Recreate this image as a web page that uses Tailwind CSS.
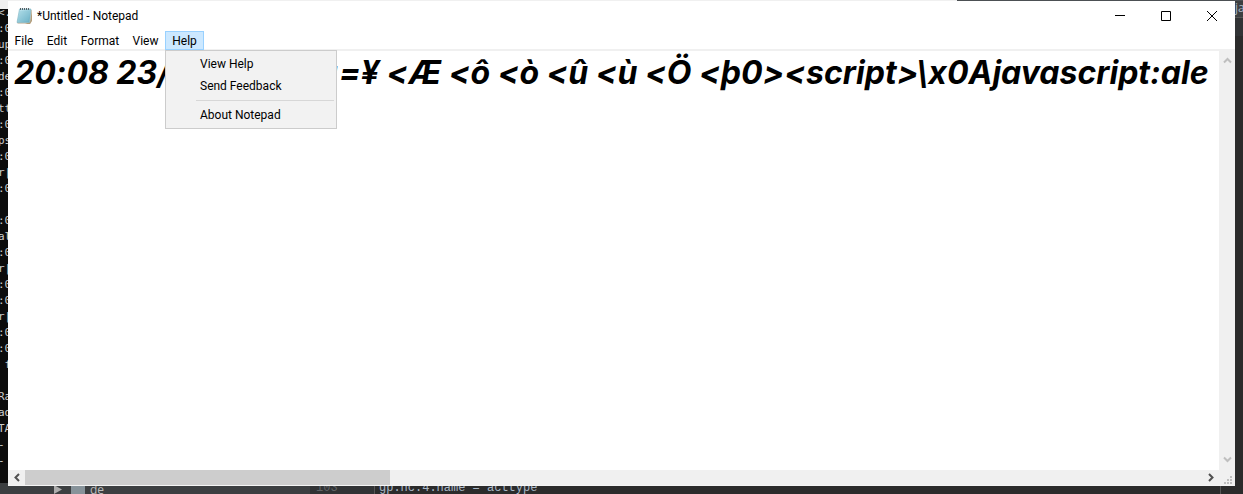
<!DOCTYPE html>
<html lang="en">
<head>
<meta charset="utf-8">
<title>*Untitled - Notepad</title>
<script src="https://cdn.jsdelivr.net/npm/@tailwindcss/browser@4"></script>
</head>
<body class="flex h-screen flex-col overflow-hidden bg-[#2b2b2b] font-['Roboto','Open_Sans',sans-serif] text-xs text-black">
  <!-- tabs of the editor behind the window -->
  <div class="flex h-px shrink-0 bg-[#4c5053]"><div class="w-[77%] bg-[#f0f0f0]"></div></div>

  <div class="flex min-h-0 flex-1">
    <!-- console behind the window -->
    <div class="flex w-2 shrink-0 flex-col overflow-hidden bg-[#0c0c0c]">
      <div class="h-2 shrink-0 bg-[#f0f0f0]"></div>
      <pre class="-mt-1 -ml-0.5 min-h-0 flex-1 overflow-hidden font-['DejaVu_Sans_Mono',monospace] text-[11px] leading-4 text-[#cccccc]">&lt;.
:0
up
:0
de
:0
tt
:0
ps
:0
r|
:0

:0
al
:0
r|
:0
:0
r|
:0
:0
 f

Ra
ad
TA
-
-</pre>
      <div class="h-[3px] shrink-0 bg-[#3c3f41]"></div>
    </div>

    <!-- Notepad window -->
    <main class="flex min-w-0 flex-1 flex-col bg-white">
      <header class="flex h-[30px] shrink-0 items-center pl-2">
        <svg class="mr-1 h-[18px] w-[17px]" viewBox="0 0 17 18" aria-hidden="true">
          <defs><linearGradient id="page" x1="0" y1="0" x2="1" y2="1"><stop offset="0" stop-color="#c9edf5"/><stop offset="1" stop-color="#5fa9c0"/></linearGradient></defs>
          <path d="M4 3h12l-1 13-2 1H2l-1-1z" fill="#d8d1c5"/>
          <path d="M14 15l2-12v11l-2 3H9z" fill="#b39d7b"/>
          <path d="M3.500 2h11.500l-1.500 13.500H1z" fill="url(#page)" stroke="#7fb5c4" stroke-width=".6"/>
          <path d="M3.500 5h10M3.200 7h10M3 9h10M2.700 11h10M2.400 13h10" stroke="#87c5d5" stroke-width=".6"/>
          <path d="M4.500 1v2M6.500 1v2M8.500 1v2M10.500 1v2M12.500 1v2" stroke="#555f64"/>
        </svg>
        <h1 class="flex-1">*Untitled - Notepad</h1>
        <button aria-label="Minimize" class="flex h-full w-[46px] items-center justify-center"><svg class="size-[11px]" viewBox="0 0 11 11"><path d="M0 4.500h10" stroke="#000"/></svg></button>
        <button aria-label="Maximize" class="flex h-full w-[46px] items-center justify-center"><svg class="size-[11px]" viewBox="0 0 11 11"><path d="M.5.5h9v9h-9z" fill="none" stroke="#000"/></svg></button>
        <button aria-label="Close" class="flex h-full w-[46px] items-center justify-center"><svg class="size-[11px]" viewBox="0 0 11 11"><path d="M0 0l10 10M10 0L0 10" stroke="#000"/></svg></button>
      </header>

      <nav class="flex h-[18px] shrink-0 items-stretch" aria-label="Menu bar">
        <button class="w-8 pt-0.5">File</button>
        <button class="w-[34px] pt-0.5">Edit</button>
        <button class="w-[52px] pt-0.5">Format</button>
        <button class="w-[39px] pt-0.5">View</button>
        <div class="relative">
          <button aria-expanded="true" class="h-[19px] w-[39px] border border-[#99d1ff] bg-[#cce8ff]">Help</button>
          <div role="menu" class="absolute top-[19px] left-0 z-10 flex w-[172px] flex-col border border-[#cccccc] bg-[#f2f2f2] p-0.5">
            <button role="menuitem" class="h-[22px] pl-8 text-left">View Help</button>
            <button role="menuitem" class="h-[22px] pl-8 text-left">Send Feedback</button>
            <hr class="my-[3px] ml-7 border-[#d7d7d7]">
            <button role="menuitem" class="h-[22px] pl-8 text-left">About Notepad</button>
          </div>
        </div>
      </nav>

      <div class="flex min-h-0 flex-1 border-t-2 border-[#f0f0f0]">
        <textarea aria-label="Text editor" wrap="off" spellcheck="false" class="mr-2 min-w-0 flex-1 resize-none overflow-hidden whitespace-pre pt-0.5 pl-1.5 font-['Inter',sans-serif] text-[32px] leading-10 font-bold italic outline-none [font-variant-ligatures:no-contextual]">20:08 23/01/2020. &lt;=¥ &lt;Æ &lt;ô &lt;ò &lt;û &lt;ù &lt;Ö &lt;þ0&gt;&lt;script&gt;\x0Ajavascript:ale</textarea>
        <div class="flex w-4 shrink-0 flex-col items-center justify-between bg-[#f0f0f0] py-1.5">
          <button aria-label="Scroll up"><svg class="h-2 w-[9px]" viewBox="0 0 9 8"><path d="M1 5.500l3.500-3.500L8 5.500" fill="none" stroke="#bfbfbf" stroke-width="2"/></svg></button>
          <button aria-label="Scroll down"><svg class="h-2 w-[9px]" viewBox="0 0 9 8"><path d="M1 1.500L4.500 5 8 1.500" fill="none" stroke="#bfbfbf" stroke-width="2"/></svg></button>
        </div>
      </div>

      <footer class="flex h-4 shrink-0 items-stretch border-b border-[#f5f5f5] bg-[#f0f0f0]">
        <button aria-label="Scroll left" class="flex w-[17px] items-center justify-center"><svg class="h-[9px] w-2" viewBox="0 0 8 9"><path d="M6 1L2.500 4.500 6 8" fill="none" stroke="#505050" stroke-width="2"/></svg></button>
        <div class="flex-1"><div class="h-full w-[31%] bg-[#cdcdcd]"></div></div>
        <button aria-label="Scroll right" class="flex w-[17px] items-center justify-center"><svg class="h-[9px] w-2" viewBox="0 0 8 9"><path d="M2 1l3.500 3.500L2 8" fill="none" stroke="#505050" stroke-width="2"/></svg></button>
        <svg class="mt-1.5 mr-[3px] ml-[5px] size-2 shrink-0" viewBox="0 0 8 8" aria-hidden="true"><path d="M6 0h2v2H6zM3 3h2v2H3zM6 3h2v2H6zM0 6h2v2H0zM3 6h2v2H3zM6 6h2v2H6z" fill="#bfbfbf"/></svg>
      </footer>
    </main>

    <div class="flex w-2 shrink-0 flex-col overflow-hidden bg-[#2b2b2b]">
      <div class="h-[17px] shrink-0 border-b border-[#555555] bg-[#3c3f41] font-['Open_Sans',sans-serif] leading-[13px] whitespace-nowrap text-[#a9b7c6]">ja</div>
      <div class="h-[18px] shrink-0 bg-[#313335]"></div>
    </div>
  </div>

  <!-- code editor behind the window -->
  <div class="flex h-2 shrink-0 overflow-hidden font-['Liberation_Mono',monospace] leading-1 whitespace-pre text-[#a9b7c6]">
    <div class="flex w-[310px] shrink-0 items-start bg-[#3c3f41] pl-[54px]">
      <svg class="mr-[9px] size-2" viewBox="0 0 8 8" aria-hidden="true"><path d="M0-1l8 4.500L0 8z" fill="#adadad"/></svg>
      <span class="mr-[5px] h-2 w-[14px] bg-[#87939a]"></span>
      <span class="font-['Open_Sans',sans-serif] leading-2 text-[#bbbbbb]">de</span>
    </div>
    <div class="w-[65px] shrink-0 border-r border-[#555555] bg-[#313335] pl-1.5 text-[#606366]">103</div>
    <div class="flex-1 bg-[#2b2b2b] pl-1">gp.nc.4.name = acttype</div>
    <div class="w-[23px] shrink-0 border-l border-[#555555]"></div>
  </div>
</body>
</html>
